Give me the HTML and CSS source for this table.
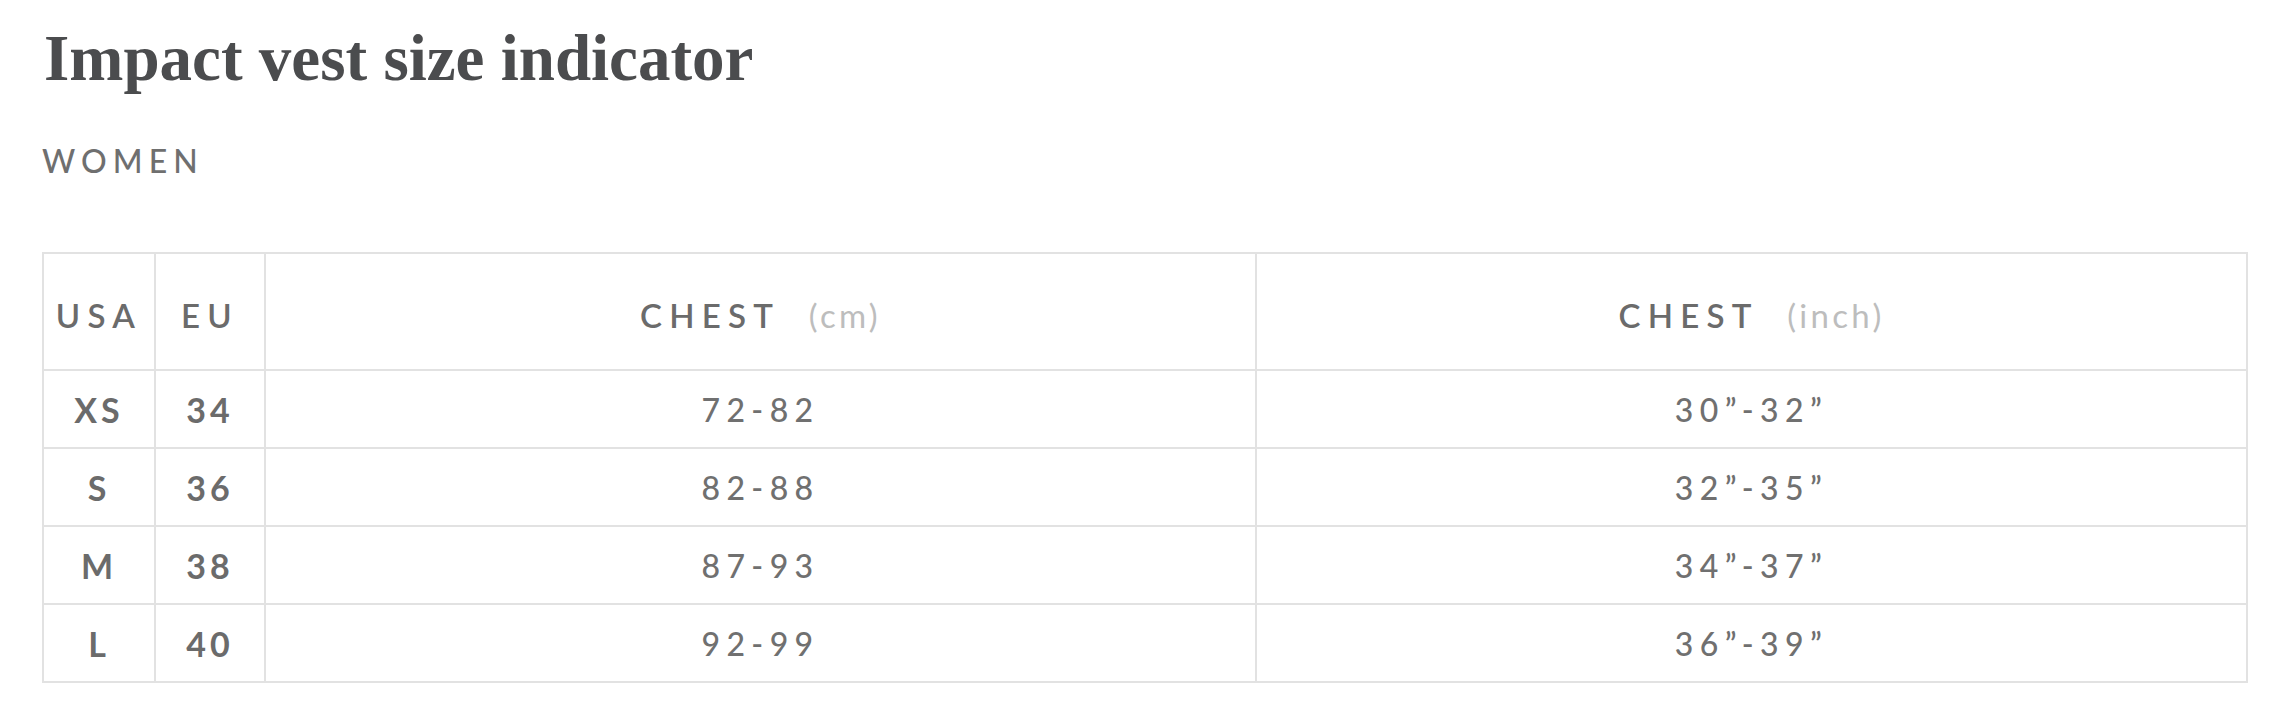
FILE: index.html
```html
<!DOCTYPE html>
<html lang="en">
<head>
<meta charset="utf-8">
<title>Impact vest size indicator</title>
<link rel="stylesheet" href="styles.css">
</head>
<body>
<main class="page">
  <h1 class="title">Impact vest size indicator</h1>
  <h2 class="group">WOMEN</h2>
  <table class="size-table">
    <colgroup>
      <col class="col-usa">
      <col class="col-eu">
      <col class="col-cm">
      <col class="col-inch">
    </colgroup>
    <thead>
      <tr>
        <th>USA</th>
        <th>EU</th>
        <th>CHEST <span class="unit">(cm)</span></th>
        <th>CHEST <span class="unit">(inch)</span></th>
      </tr>
    </thead>
    <tbody>
      <tr><td class="size">XS</td><td class="size">34</td><td class="val">72-82</td><td class="val">30”-32”</td></tr>
      <tr><td class="size">S</td><td class="size">36</td><td class="val">82-88</td><td class="val">32”-35”</td></tr>
      <tr><td class="size">M</td><td class="size">38</td><td class="val">87-93</td><td class="val">34”-37”</td></tr>
      <tr><td class="size">L</td><td class="size">40</td><td class="val">92-99</td><td class="val">36”-39”</td></tr>
    </tbody>
  </table>
</main>
</body>
</html>
```

FILE: styles.css
```css
html, body {
  margin: 0;
  padding: 0;
  background: #ffffff;
}

body {
  font-family: "Lato", "Open Sans", sans-serif;
  color: #6e6e6e;
}

.page {
  padding: 20px 36px 0 42px;
}

.title {
  margin: 0 0 0 2px;
  font-family: "Liberation Serif", "Times New Roman", serif;
  font-weight: 700;
  font-size: 65px;
  line-height: 76px;
  color: #4b4c4e;
}

.group {
  margin: 45px 0 71px 0;
  font-size: 32px;
  line-height: 40px;
  font-weight: 500;
  letter-spacing: 0.19em;
  color: #6f6f6f;
}

.size-table {
  width: 100%;
  border-collapse: collapse;
  table-layout: fixed;
  border: 2px solid #e2e2e2;
}

.col-usa { width: 112px; }
.col-eu { width: 110px; }
.col-cm { width: 991px; }
.col-inch { width: auto; }

.size-table th,
.size-table td {
  border: 2px solid #e2e2e2;
  text-align: center;
  padding: 0;
}

.size-table th {
  height: 108px;
  padding-top: 7px;
  font-size: 33px;
  font-weight: 600;
  letter-spacing: 0.22em;
  color: #6b6b6b;
}

.unit {
  margin-left: 14px;
  font-weight: 400;
  letter-spacing: 0.1em;
  color: #bdbdbd;
}

.size-table td {
  height: 76px;
}

.size {
  font-size: 34px;
  font-weight: 700;
  letter-spacing: 0.12em;
  color: #6b6b6b;
}

.val {
  font-size: 32px;
  font-weight: 500;
  letter-spacing: 0.2em;
  color: #707070;
}
```
